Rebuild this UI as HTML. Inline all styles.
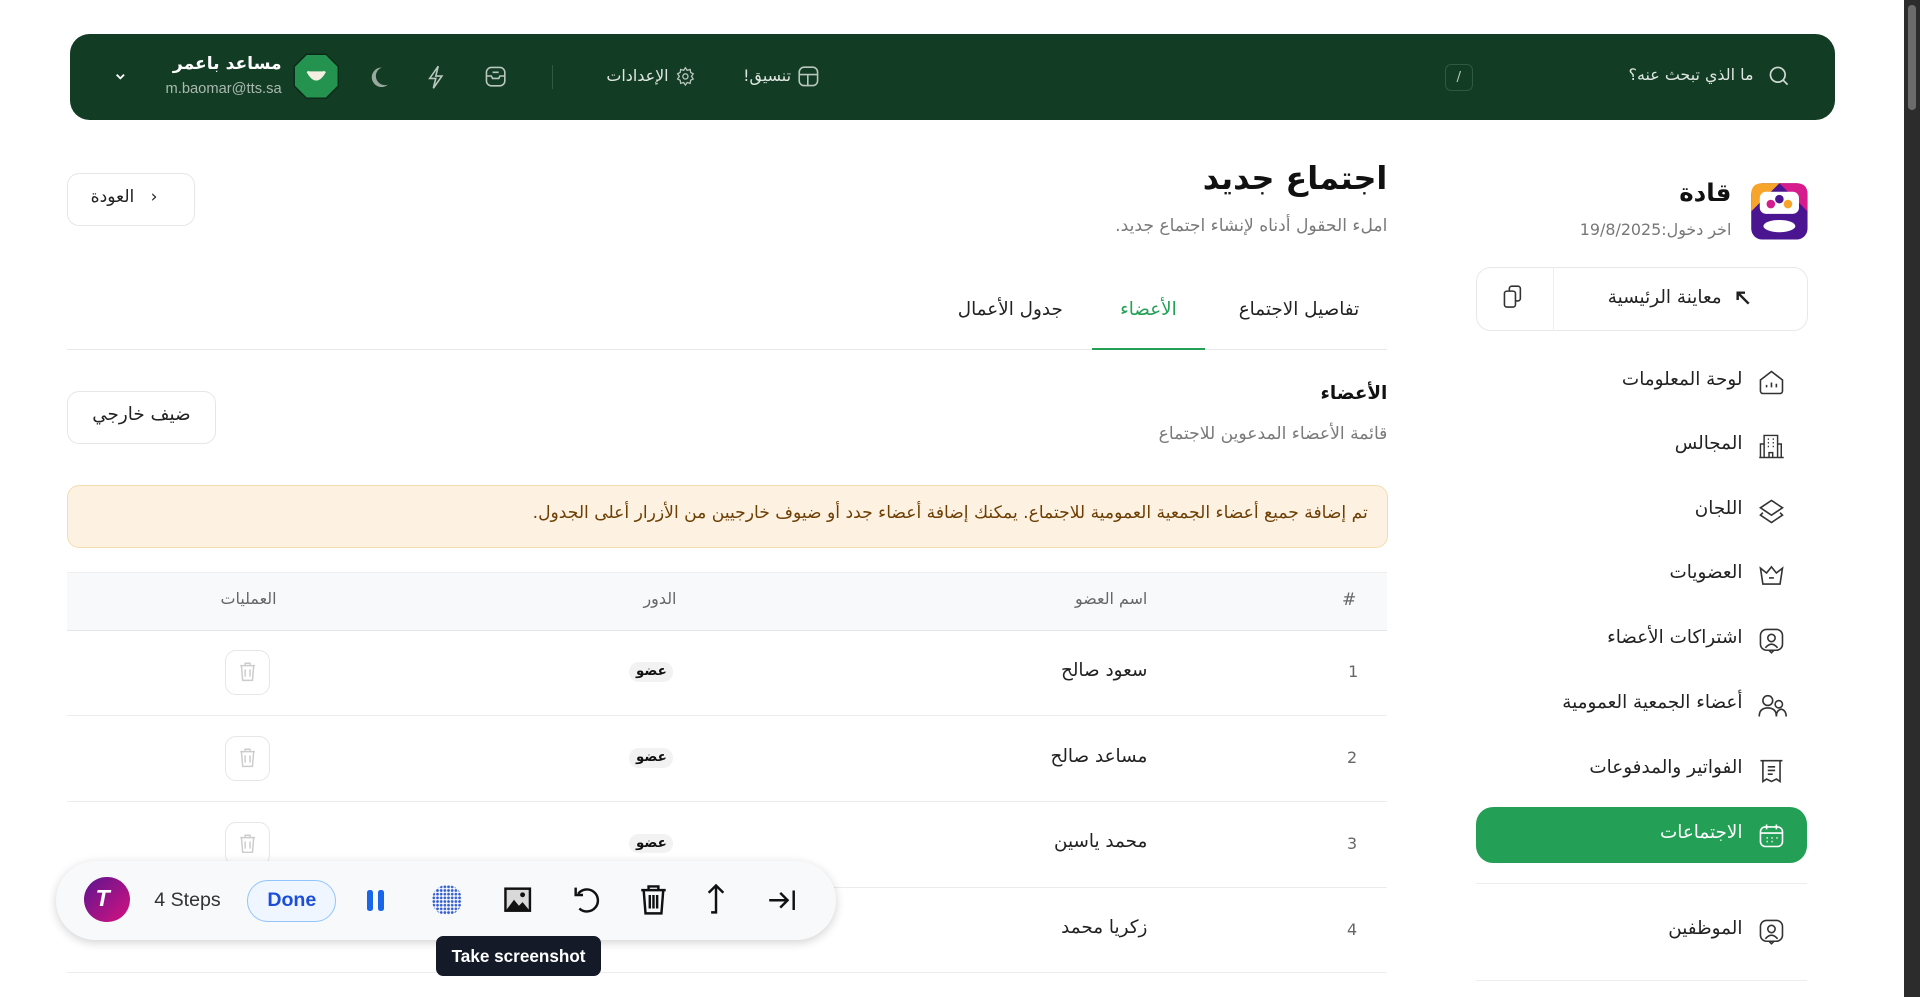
<!DOCTYPE html>
<html><head><meta charset="utf-8">
<style>
html,body{margin:0;padding:0;background:#fff;overflow:hidden}
body{width:1568px;height:814px;zoom:1.22449;position:relative;font-family:"DejaVu Sans","Liberation Sans",sans-serif;color:#1f2328}
.a{position:absolute}
.r{direction:rtl;white-space:nowrap}
svg{display:block}
.nav{position:absolute;right:145px;font-size:15px;color:#222;direction:rtl;white-space:nowrap}
.ni{position:absolute;left:1436px}
.row{position:absolute;left:55px;width:1078px;height:70px;border-bottom:1px solid #ececec}
</style></head><body>
<!-- scrollbar -->
<div class="a" style="left:1555px;top:0;width:13px;height:814px;background:#2c2c2c;z-index:5"></div>
<div class="a" style="left:1558px;top:4px;width:7px;height:86px;background:#6b6b6b;border-radius:3px;z-index:6"></div>

<!-- header -->
<div class="a" style="left:57px;top:28px;width:1442px;height:70px;background:#123c24;border-radius:16px"></div>
<svg class="a" style="left:1444px;top:53px" width="18" height="18" viewBox="0 0 18 18" fill="none" stroke="#cfd8d2" stroke-width="1.4"><circle cx="8" cy="8" r="6"/><path d="M12.5 12.5 16 16"/></svg>
<div class="a r" style="right:136px;top:53px;font-size:13px;color:#dfe6e1">ما الذي تبحث عنه؟</div>
<div class="a" style="left:1180px;top:52px;width:21px;height:21px;border:1px solid #2f5a40;border-radius:5px;color:#b9c7be;font-size:11px;text-align:center;line-height:21px">/</div>
<svg class="a" style="left:92px;top:58px" width="12" height="10" viewBox="0 0 12 10"><path d="M3 3l3 3 3-3" stroke="#fff" stroke-width="1.5" fill="none"/></svg>
<div class="a" style="right:1338px;top:66px;font-size:12px;color:#a9b9ae;font-family:'Liberation Sans',sans-serif">m.baomar@tts.sa</div>
<div class="a r" style="right:1338px;top:44px;font-size:14px;color:#fff;font-weight:bold">مساعد باعمر</div>
<svg class="a" style="left:239px;top:43px" width="38" height="38" viewBox="0 0 38 38"><path d="M11 1h16l10 10v16l-10 10H11L1 27V11z" fill="#23934f" stroke="#0c2a18" stroke-width="1.2"/><path d="M12 15q7 13 14 0" fill="#f3efe2" stroke="#f3efe2" stroke-width="2" stroke-linejoin="round"/></svg>
<svg class="a" style="left:299px;top:53px" width="20" height="20" viewBox="0 0 20 20"><path d="M13 2a8 8 0 1 0 5 14A7 7 0 0 1 13 2z" fill="#9aa9a0"/></svg>
<svg class="a" style="left:348px;top:53px" width="16" height="20" viewBox="0 0 16 20" fill="none" stroke="#b9c7be" stroke-width="1.3"><path d="M10 1 3 11h5l-2 8 7-10H8z"/></svg>
<svg class="a" style="left:395px;top:53px" width="19" height="19" viewBox="0 0 19 19" fill="none" stroke="#b9c7be" stroke-width="1.3"><rect x="2" y="2" width="15" height="15" rx="4"/><path d="M2 9h4l1 2h5l1-2h4M7 6h5"/></svg>
<div class="a" style="left:451px;top:53px;width:1px;height:20px;background:#2f5a40"></div>
<svg class="a" style="left:551px;top:54px" width="17" height="17" viewBox="0 0 24 24" fill="none" stroke="#b9c7be" stroke-width="1.5"><circle cx="12" cy="12" r="3"/><path d="M12 2l2 3 3.5-1 .5 3.5L21 9l-2 3 2 3-3 1.5-.5 3.5-3.5-1-2 3-2-3-3.5 1L6 16.5 3 15l2-3-2-3 3-1.5L6.5 4 10 5z"/></svg>
<div class="a r" style="right:1022px;top:54px;font-size:13px;color:#dfe6e1">الإعدادات</div>
<svg class="a" style="left:652px;top:54px" width="17" height="17" viewBox="0 0 17 17" fill="none" stroke="#b9c7be" stroke-width="1.3"><rect x="1" y="1" width="15" height="15" rx="4"/><path d="M1 7h15M8 7v9"/></svg>
<div class="a r" style="right:922px;top:54px;font-size:13px;color:#dfe6e1">تنسيق!</div>

<!-- sidebar -->
<svg class="a" style="left:1429px;top:149px" width="48" height="48" viewBox="0 0 48 48"><rect x="1" y="1" width="46" height="46" rx="9" fill="#4b1591"/><path d="M1 10Q1 1 10 1h14L1 24z" fill="#f6a52a"/><path d="M24 1h14q9 0 9 9v14z" fill="#d61b8c"/><rect x="8" y="8" width="32" height="18" rx="5" fill="#fff"/><circle cx="17" cy="18" r="3.5" fill="#d61b8c"/><circle cx="24" cy="14" r="3.5" fill="#4b1591"/><circle cx="31" cy="18" r="3.5" fill="#f6a52a"/><ellipse cx="24" cy="36" rx="13" ry="5" fill="#fff"/></svg>
<div class="a r" style="right:154px;top:145px;font-size:20px;font-weight:bold;color:#111">قادة</div>
<div class="a r" style="right:154px;top:180px;font-size:13px;color:#777">اخر دخول:19/8/2025</div>
<div class="a" style="left:1205px;top:218px;width:270px;height:51px;border:1px solid #e8e8e8;border-radius:12px"></div>
<div class="a" style="left:1268px;top:219px;width:1px;height:51px;background:#eee"></div>
<svg class="a" style="left:1227px;top:233px" width="18" height="20" viewBox="0 0 18 20" fill="none" stroke="#333" stroke-width="1.3"><rect x="2" y="5" width="9" height="13" rx="2"/><path d="M6 5V3a2 2 0 0 1 2-2h5a2 2 0 0 1 2 2v8a2 2 0 0 1-2 2h-2"/></svg>
<div class="a r" style="right:162px;top:234px;font-size:15px;color:#222">معاينة الرئيسية</div>
<svg class="a" style="left:1416px;top:236px" width="14" height="14" viewBox="0 0 14 14" fill="none" stroke="#222" stroke-width="2"><path d="M12 12 3 3M3 9V3h6"/></svg>

<div class="nav" style="top:301px">لوحة المعلومات</div>
<div class="nav" style="top:354px">المجالس</div>
<div class="nav" style="top:407px">اللجان</div>
<div class="nav" style="top:459px">العضويات</div>
<div class="nav" style="top:512px">اشتراكات الأعضاء</div>
<div class="nav" style="top:565px">أعضاء الجمعية العمومية</div>
<div class="nav" style="top:618px">الفواتير والمدفوعات</div>
<svg class="ni" style="top:301px" width="22" height="22" viewBox="0 0 22 22" fill="none" stroke="#333" stroke-width="1.3"><path d="M2 9l9-7 9 7v9a2 2 0 0 1-2 2H4a2 2 0 0 1-2-2z"/><path d="M7 15v-2M11 15v-4M15 15v-3"/></svg>
<svg class="ni" style="top:354px" width="22" height="22" viewBox="0 0 22 22" fill="none" stroke="#333" stroke-width="1.2"><path d="M1 20h20M5 20V2h11v18M5 9H2v11M16 9h3v11M8 5h1M12 5h1M8 8h1M12 8h1M8 11h1M12 11h1M9 20v-4h3v4"/></svg>
<svg class="ni" style="top:407px" width="22" height="22" viewBox="0 0 22 22" fill="none" stroke="#333" stroke-width="1.3"><path d="M11 2l9 6-9 6-9-6z"/><path d="M4 12l-2 2 9 6 9-6-2-2"/></svg>
<svg class="ni" style="top:459px" width="22" height="22" viewBox="0 0 22 22" fill="none" stroke="#333" stroke-width="1.3"><path d="M2 5l5 4 4-5 4 5 5-4-2 13H4z"/><path d="M9 13h4"/></svg>
<svg class="ni" style="top:512px" width="22" height="22" viewBox="0 0 22 22" fill="none" stroke="#333" stroke-width="1.3"><rect x="2" y="2" width="18" height="17" rx="5"/><circle cx="11" cy="9" r="3"/><path d="M6 17q5-6 10 0M9 19l2 2 2-2"/></svg>
<svg class="ni" style="top:565px" width="24" height="22" viewBox="0 0 24 22" fill="none" stroke="#333" stroke-width="1.3"><circle cx="8" cy="7" r="4"/><path d="M1 20q0-7 7-7t7 7"/><circle cx="17" cy="10" r="3"/><path d="M15 20q0-5 4-6 4 1 4 6"/></svg>
<svg class="ni" style="top:618px" width="22" height="22" viewBox="0 0 22 22" fill="none" stroke="#333" stroke-width="1.3"><path d="M2 3h18M4 3v17l3-2 4 2 4-2 3 2V3M8 8h6M8 11h6M8 14h4"/></svg>

<div class="a" style="left:1205px;top:659px;width:271px;height:46px;background:#24a056;border-radius:14px"></div>
<div class="nav" style="top:671px;color:#fff">الاجتماعات</div>
<svg class="ni" style="top:671px" width="22" height="22" viewBox="0 0 22 22" fill="none" stroke="#fff" stroke-width="1.3"><rect x="2" y="4" width="18" height="16" rx="4"/><path d="M2 9h18M7 2v4M15 2v4M7 13h1M11 13h1M15 13h1M7 16h1M11 16h1"/></svg>
<div class="a" style="left:1205px;top:721px;width:271px;height:1px;background:#eee"></div>
<div class="nav" style="top:750px">الموظفين</div>
<svg class="ni" style="top:750px" width="22" height="22" viewBox="0 0 22 22" fill="none" stroke="#333" stroke-width="1.3"><rect x="2" y="2" width="18" height="17" rx="5"/><circle cx="11" cy="9" r="3"/><path d="M6 17q5-6 10 0M9 19l2 2 2-2"/></svg>
<div class="a" style="left:1205px;top:800px;width:271px;height:1px;background:#eee"></div>

<!-- main -->
<div class="a r" style="right:435px;top:130px;font-size:26px;font-weight:bold;color:#111">اجتماع جديد</div>
<div class="a r" style="right:435px;top:176px;font-size:14px;color:#7a7a7a">املء الحقول أدناه لإنشاء اجتماع جديد.</div>
<div class="a" style="left:55px;top:141px;width:103px;height:42px;border:1px solid #e6e6e6;border-radius:10px"></div>
<div class="a r" style="left:74px;top:153px;font-size:14px;color:#222">‹&nbsp;&nbsp;&nbsp;العودة</div>

<div class="a" style="left:55px;top:285px;width:1078px;height:1px;background:#e8e8e8"></div>
<div class="a" style="left:892px;top:284px;width:92px;height:2px;background:#24a056"></div>
<div class="a r" style="right:458px;top:244px;font-size:15px;color:#222">تفاصيل الاجتماع</div>
<div class="a r" style="right:607px;top:244px;font-size:15px;color:#24a056">الأعضاء</div>
<div class="a r" style="right:700px;top:244px;font-size:15px;color:#222">جدول الأعمال</div>

<div class="a r" style="right:435px;top:313px;font-size:15px;font-weight:bold;color:#111">الأعضاء</div>
<div class="a r" style="right:435px;top:346px;font-size:14px;color:#7a7a7a">قائمة الأعضاء المدعوين للاجتماع</div>
<div class="a" style="left:55px;top:319px;width:120px;height:42px;border:1px solid #e6e6e6;border-radius:10px"></div>
<div class="a r" style="left:55px;width:121px;text-align:center;top:330px;font-size:15px;color:#222">ضيف خارجي</div>

<div class="a" style="left:55px;top:396px;width:1077px;height:50px;background:#fdf2e2;border:1px solid #f4dcb2;border-radius:10px"></div>
<div class="a r" style="right:451px;top:411px;font-size:14px;color:#6e3f05">تم إضافة جميع أعضاء الجمعية العمومية للاجتماع. يمكنك إضافة أعضاء جدد أو ضيوف خارجيين من الأزرار أعلى الجدول.</div>

<div class="a" style="left:55px;top:467px;width:1078px;height:47px;background:#f8f9fa;border-top:1px solid #eee;border-bottom:1px solid #e6e6e6"></div>
<div class="a" style="left:1096px;top:482px;font-size:14px;color:#666">#</div>
<div class="a r" style="right:631px;top:481px;font-size:13px;color:#666">اسم العضو</div>
<div class="a r" style="left:510px;width:58px;text-align:center;top:481px;font-size:13px;color:#666">الدور</div>
<div class="a r" style="left:168px;width:70px;text-align:center;top:481px;font-size:13px;color:#666">العمليات</div>

<div class="row" style="top:514px"></div>
<div class="row" style="top:584px"></div>
<div class="row" style="top:654px"></div>
<div class="row" style="top:724px"></div>

<div class="a" style="left:1101px;top:541px;font-size:13px;color:#666">1</div>
<div class="a" style="left:1100px;top:611px;font-size:13px;color:#666">2</div>
<div class="a" style="left:1100px;top:681px;font-size:13px;color:#666">3</div>
<div class="a" style="left:1100px;top:751px;font-size:13px;color:#666">4</div>
<div class="a r" style="right:631px;top:539px;font-size:15px;color:#222">سعود صالح</div>
<div class="a r" style="right:631px;top:609px;font-size:15px;color:#222">مساعد صالح</div>
<div class="a r" style="right:631px;top:679px;font-size:15px;color:#222">محمد ياسين</div>
<div class="a r" style="right:631px;top:749px;font-size:15px;color:#222">زكريا محمد</div>
<div class="a r" style="left:514px;top:541px;width:36px;height:16px;background:#f2f2f2;border-radius:8px;font-size:11px;text-align:center;line-height:16px;color:#111;font-weight:bold">عضو</div>
<div class="a r" style="left:514px;top:611px;width:36px;height:16px;background:#f2f2f2;border-radius:8px;font-size:11px;text-align:center;line-height:16px;color:#111;font-weight:bold">عضو</div>
<div class="a r" style="left:514px;top:681px;width:36px;height:16px;background:#f2f2f2;border-radius:8px;font-size:11px;text-align:center;line-height:16px;color:#111;font-weight:bold">عضو</div>
<div class="a" style="left:184px;top:531px;width:35px;height:35px;border:1px solid #e6e6e6;border-radius:9px"></div>
<div class="a" style="left:184px;top:601px;width:35px;height:35px;border:1px solid #e6e6e6;border-radius:9px"></div>
<div class="a" style="left:184px;top:671px;width:35px;height:35px;border:1px solid #e6e6e6;border-radius:9px"></div>
<svg class="a" style="left:195px;top:541px" width="14" height="16" viewBox="0 0 14 16" fill="none" stroke="#ccc" stroke-width="1.2"><path d="M1 3h12M5 3V1h4v2M2 3l1 12h8l1-12M5 6v6M9 6v6"/></svg>
<svg class="a" style="left:195px;top:611px" width="14" height="16" viewBox="0 0 14 16" fill="none" stroke="#ccc" stroke-width="1.2"><path d="M1 3h12M5 3V1h4v2M2 3l1 12h8l1-12M5 6v6M9 6v6"/></svg>
<svg class="a" style="left:195px;top:681px" width="14" height="16" viewBox="0 0 14 16" fill="none" stroke="#ccc" stroke-width="1.2"><path d="M1 3h12M5 3V1h4v2M2 3l1 12h8l1-12M5 6v6M9 6v6"/></svg>

<!-- toolbar -->
<div class="a" style="left:46px;top:703px;width:637px;height:65px;background:#f8f9fb;border-radius:33px;box-shadow:0 2px 8px rgba(0,0,0,.18)"></div>
<div class="a" style="left:69px;top:716px;width:37px;height:37px;border-radius:50%;background:linear-gradient(135deg,#5b1590,#d6127f)"></div>
<div class="a" style="left:78px;top:723px;font-size:19px;font-weight:bold;color:#fff;font-family:'Liberation Sans',sans-serif;font-style:italic">T</div>
<div class="a" style="left:126px;top:726px;font-size:16px;color:#333;font-family:'Liberation Sans',sans-serif">4 Steps</div>
<div class="a" style="left:202px;top:719px;width:71px;height:32px;border:1.5px solid #93c5fd;background:#eff6ff;border-radius:17px;color:#1d4ed8;font-weight:bold;font-size:16px;text-align:center;line-height:32px;font-family:'Liberation Sans',sans-serif">Done</div>
<div class="a" style="left:300px;top:727px;width:5px;height:17px;background:#1a66e8;border-radius:2px"></div>
<div class="a" style="left:309px;top:727px;width:5px;height:17px;background:#1a66e8;border-radius:2px"></div>
<div class="a" style="left:353px;top:723px;width:24px;height:24px;border-radius:50%;background:radial-gradient(circle,#2350c8 1px,transparent 1.3px) 0 0/3px 3px;opacity:.9"></div>
<svg class="a" style="left:411px;top:723px" width="24" height="24" viewBox="0 0 24 24"><rect x="1" y="2" width="22" height="20" fill="#111"/><rect x="3" y="4" width="18" height="16" fill="#d9d9d9"/><path d="M3 20l6-8 4 5 3-3 5 6z" fill="#111"/><circle cx="16" cy="8" r="2" fill="#111"/></svg>
<svg class="a" style="left:467px;top:722px" width="24" height="26" viewBox="0 0 24 26" fill="none" stroke="#111" stroke-width="2"><path d="M5 8a9 9 0 1 1 1 12"/><path d="M3 3v6h6"/></svg>
<svg class="a" style="left:523px;top:722px" width="22" height="26" viewBox="0 0 22 26" fill="none" stroke="#111" stroke-width="2"><path d="M1 5h20M7 5V2h8v3M3 5l1.5 19h13L19 5M8 9v11M11 9v11M14 9v11"/></svg>
<svg class="a" style="left:576px;top:721px" width="18" height="28" viewBox="0 0 18 28" fill="none" stroke="#111" stroke-width="2"><path d="M3 8l6-6 6 6M9 2v22H5"/></svg>
<svg class="a" style="left:627px;top:725px" width="24" height="20" viewBox="0 0 24 20" fill="none" stroke="#111" stroke-width="2"><path d="M1 10h15M10 4l6 6-6 6M21 2v16"/></svg>
<div class="a" style="left:356px;top:764px;width:135px;height:33px;background:#141a28;border-radius:6px;color:#fff;font-weight:bold;font-size:14px;text-align:center;line-height:33px;font-family:'Liberation Sans',sans-serif">Take screenshot</div>
</body></html>
